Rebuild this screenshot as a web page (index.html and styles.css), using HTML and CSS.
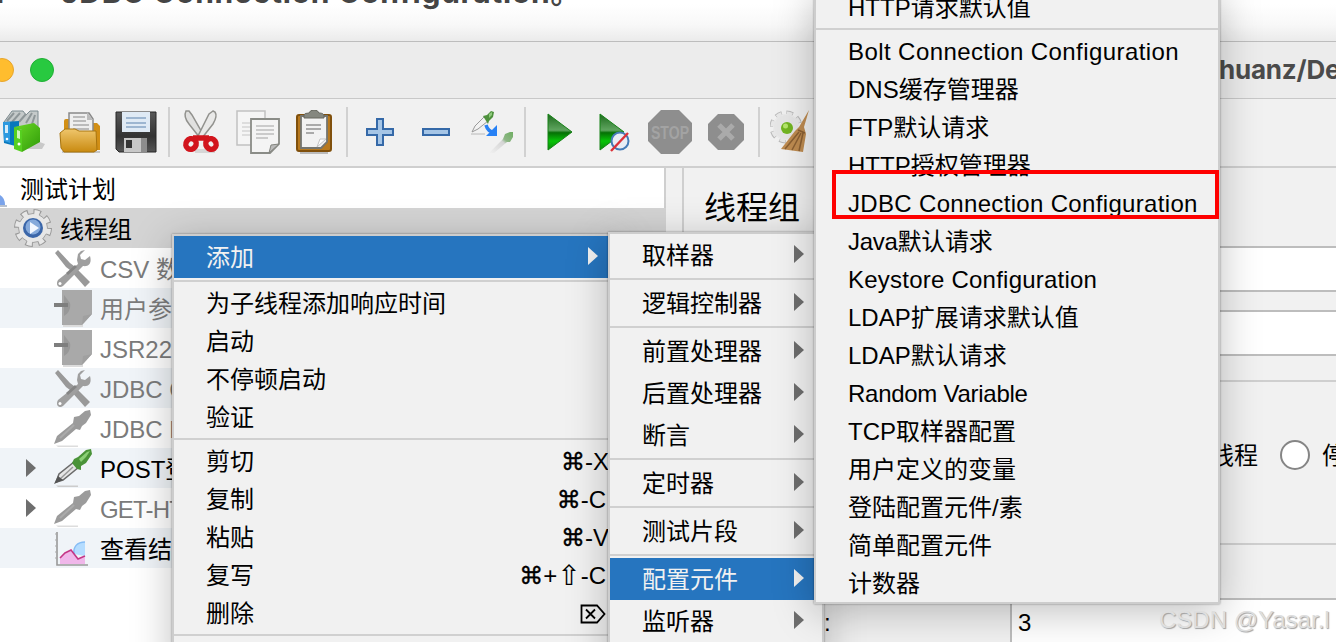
FILE: index.html
```html
<!DOCTYPE html>
<html lang="zh-CN">
<head>
<meta charset="utf-8">
<title>JMeter</title>
<link rel="stylesheet" href="styles.css">
</head>
<body>
<svg class="defs" width="0" height="0">
  <defs>
    <linearGradient id="gPlay" x1="0" y1="0" x2="0" y2="1"><stop offset="0" stop-color="#1d6a1d"/><stop offset=".45" stop-color="#5fa55f"/><stop offset=".52" stop-color="#067006"/><stop offset=".75" stop-color="#08c408"/><stop offset="1" stop-color="#0a8a0a"/></linearGradient>
    <linearGradient id="gFolder" x1="0" y1="0" x2="0" y2="1"><stop offset="0" stop-color="#efc66c"/><stop offset="1" stop-color="#c98a10"/></linearGradient>
    <linearGradient id="gGreen" x1="0" y1="0" x2="1" y2="1"><stop offset="0" stop-color="#6ddb28"/><stop offset="1" stop-color="#2f9a08"/></linearGradient>
    <linearGradient id="gDark" x1="0" y1="0" x2="0" y2="1"><stop offset="0" stop-color="#585858"/><stop offset=".6" stop-color="#333"/><stop offset="1" stop-color="#555"/></linearGradient>
    <linearGradient id="gFade" x1="1" y1="0" x2="0" y2="1"><stop offset="0" stop-color="#6fae62"/><stop offset=".35" stop-color="#8fb787"/><stop offset=".45" stop-color="#d5d5d5"/><stop offset="1" stop-color="#f1f1f1"/></linearGradient>
    <symbol id="tools" viewBox="0 0 40 40">
      <path d="M2 5 5 2l12 13 4 3 16 16-5 5-15-17-4-3z" fill="#999"/>
      <path d="M28 3l-3 3-1 6 1 4L5 32c-3 5 1 9 5 6l20-20c6 1 9-3 7-10l-5 4-4-1-1-4 5-5z" fill="#9f9f9f"/>
      <path d="M14 26l9-8" stroke="#858585" stroke-width="3"/><circle cx="7" cy="35.500" r="1.500" fill="#fff"/>
    </symbol>
    <symbol id="note" viewBox="0 0 40 40">
      <path d="M10 37h20v2H10z" fill="#dcdcdc"/>
      <path d="M9 2h30v24L29 37H9z" fill="#a9a9a9"/><path d="M29 37l1-9 9-2z" fill="#a0a0a0"/>
      <path d="M11 7l6 8c1 5-1 10-6 13" fill="#989898"/><path d="M1 15h14v4H1z" fill="#7e7e7e"/>
    </symbol>
    <symbol id="dropgray" viewBox="0 0 40 40">
      <path d="M3 37.500h22v1.500H5z" fill="#ddd"/>
      <path d="M1 36l3-8L20 15l1-6 5-1 6-5 5-1 1 5-5 8-4 3-2 4-4-1L9 33z" fill="#9b9b9b"/>
      <path d="M7 30l14-13" stroke="#ababab" stroke-width="2"/>
    </symbol>
    <symbol id="dropper" viewBox="0 0 40 40">
      <path d="M3 37.500h22v1.500H5z" fill="#ccc"/>
      <path d="M3 34l3-8L21 14l5 5L10 32z" fill="#e6e6e6" stroke="#6a6a6a" stroke-width="1.500"/>
      <path d="M7 31L20 19" stroke="#999" stroke-width="1.500"/><path d="M1 36l4-8 5 4z" fill="#555"/>
      <path d="M21 11l4-2 8-7 5-1 1 5-6 9-5 3 0 4-4-1-5-6z" fill="#4a9338"/><path d="M26 11l8-7 3-1-4 6-5 5z" fill="#8bcf76"/>
    </symbol>
  </defs>
</svg>

<div class="screen">
  <header class="article"><span class="article-mark">l</span><span class="article-title">JDBC Connection Configuration。</span></header>

  <div class="titlebar">
    <i class="light amber"></i><i class="light green"></i>
    <span class="path">huanz/De</span>
  </div>

  <div class="toolbar">
    <svg viewBox="0 0 44 44"><path d="M12 39h28l3-5-8-3z" fill="#c9c9c9"/><path d="M2 12L10 1h11l3 4 4-4h8v24L12 33z" fill="#c5caca" stroke="#7d8b90"/><path d="M5 11l7-8M10 12l8-9M17 12l7-8M24 13l6-10M30 14l3-9" stroke="#8e9698" stroke-width="2"/><path d="M1 12l16-1v26l-15-4z" fill="#0878bd"/><path d="M1 12h7v21l-6-2z" fill="#2d9ae0"/><path d="M3 15h3v8H3z" fill="#d6edfa"/><path d="M12 17l8 3v22l-8-3z" fill="#56cf20"/><path d="M12 17l20-4 6 5v14l-18 10V20z" fill="url(#gGreen)"/><path d="M15 20l3 1v8l-3-1z" fill="#cff5bc"/><circle cx="17" cy="34" r="1.500" fill="#fff"/><circle cx="5" cy="29" r="1.300" fill="#fff"/></svg>
    <svg viewBox="0 0 44 44"><path d="M4 41h38v2H4z" fill="#c5c5c5"/><path d="M6 11q0-2 2-2h5l2 4h24l3 3v24H6z" fill="#d28f15"/><path d="M11 24V3h20l4 6v18z" fill="#eee" stroke="#898989" stroke-width="1.500"/><path d="M15 7h12M15 11h13M15 15h16M15 19h16" stroke="#aaa" stroke-width="1.700"/><path d="M29 2l6 8h-6z" fill="#bbb"/><path d="M2 23l5-4h10l4 2h17l1 19-3 2H6l-3-4z" fill="url(#gFolder)" stroke="#a8740d"/></svg>
    <svg viewBox="0 0 44 44"><path d="M2 2h40v40H5l-3-3z" fill="url(#gDark)" stroke="#272727"/><path d="M8 2h28v20H8z" fill="#dfeaf5"/><path d="M12 8h20M12 13h20M12 17h20" stroke="#9db6d1" stroke-width="2"/><path d="M10 28h22v14H10z" fill="#c8c8c8"/><path d="M12 30h6v8h-6z" fill="#343434"/><path d="M27 28h6v14h-6z" fill="#8d8d8d"/></svg>
    <i class="sep"></i>
    <svg viewBox="0 0 44 44"><path d="M15 39h20v4H15z" fill="#d6d6d6"/><path d="M6 1c-2 4-1 8 3 13l11 14 4-2L12 5 9 1z" fill="#e0e0df" stroke="#92928e" stroke-width="1.500"/><path d="M33 1l-4 3-11 22 4 2 11-14c3-5 4-9 2-12z" fill="#e9e9e8" stroke="#92928e" stroke-width="1.500"/><g fill="none" stroke="#d2151d" stroke-width="5.500"><ellipse cx="11" cy="34" rx="5" ry="5.500" transform="rotate(35 11 34)"/><ellipse cx="31" cy="34" rx="5" ry="5.500" transform="rotate(-35 31 34)"/><path d="M13 28l8 0 8 0"/></g></svg>
    <svg viewBox="0 0 44 44"><path d="M1 1h28v34H1z" fill="#f5f5f5" stroke="#c1c1c1" stroke-width="1.500"/><path d="M6 13h10M6 17h10M6 21h10M6 25h10" stroke="#d5d5d5" stroke-width="1.500"/><path d="M15 9h28v25l-9 9H15z" fill="#f4f4f4" stroke="#8a8c87" stroke-width="1.800"/><path d="M20 16h18M20 20h18M20 24h18M20 28h12" stroke="#bdbdbd" stroke-width="1.600"/><path d="M33 43l2-8 8-1z" fill="#bbb" stroke="#83857f"/></svg>
    <svg viewBox="0 0 44 44"><path d="M8 42h28v2H8z" fill="#bbb"/><rect x="5" y="5" width="34" height="36" rx="2" fill="#b8791e" stroke="#80500c" stroke-width="2"/><path d="M9 6h26v26l-6 6H9z" fill="#f2f2f2" stroke="#747570" stroke-width="1.800"/><path d="M12 8v-3q0-2 5-2 1-3 5-3t5 3q5 0 5 3v2z" fill="#85877f" stroke="#66675f"/><path d="M14 15h15M14 19h15M14 23h8" stroke="#aaa" stroke-width="1.800"/><path d="M25 37l3-8 6 0z" fill="#fff" stroke="#c2c2c2"/></svg>
    <i class="sep"></i>
    <svg viewBox="0 0 44 44"><path d="M19 9h6v10h10v6H25v10h-6V25H9v-6h10z" fill="#a5c5e6" stroke="#3569a8" stroke-width="2"/></svg>
    <svg viewBox="0 0 44 44"><path d="M9 19h26v6H9z" fill="#a5c5e6" stroke="#3569a8" stroke-width="2"/></svg>
    <svg viewBox="0 0 44 44"><path d="M1 24h14" stroke="#b8b8b8"/><path d="M2 22l3-6L14 7l4 4L8 19z" fill="#f2f2f2" stroke="#999"/><path d="M13 6l4-1 4-4 3 1-1 5-4 4-1 3z" fill="#4e913d"/><path d="M19 4l3-2v3l-3 3z" fill="#8fcb7e"/><path d="M16 15q2 7 8 7" fill="none" stroke="#2781f5" stroke-width="3.500"/><path d="M27 15v11H16z" fill="#2781f5"/><path d="M19 43L33 29l2-5 5-2h3v5l-3 5-3 0L24 43z" fill="url(#gFade)"/></svg>
    <i class="sep"></i>
    <svg viewBox="0 0 44 44"><path d="M12 4l24 18-24 18z" fill="url(#gPlay)" stroke="#168216"/></svg>
    <svg viewBox="0 0 44 44"><path d="M8 4l24 18L8 40z" fill="url(#gPlay)" stroke="#168216"/><circle cx="28" cy="31" r="8.500" fill="#e8edf5" stroke="#457bb7" stroke-width="2"/><path d="M19 41l17-18" stroke="#dc3239" stroke-width="2.400"/></svg>
    <svg viewBox="0 0 44 44"><path d="M13 0h18l13 13v18L31 44H13L0 31V13z" fill="#8e8e8e"/><text x="3" y="29" class="stop" textLength="38" lengthAdjust="spacingAndGlyphs">STOP</text></svg>
    <svg viewBox="0 0 44 44"><path d="M14 4h16l10 10v16L30 40H14L4 30V14z" fill="#8e8e8e"/><path d="M15 15l14 14M29 15L15 29" stroke="#aaa" stroke-width="5"/></svg>
    <i class="sep"></i>
    <svg viewBox="0 0 44 44"><circle cx="16" cy="17" r="13" fill="#e1e1e1" stroke="#b9b9b9" stroke-width="7" stroke-dasharray="6 4.210"/><circle cx="16" cy="17" r="13" fill="#ececec" stroke="#e8e8e8" stroke-width="5" stroke-dasharray="5 5.210" stroke-dashoffset="-.5"/><circle cx="16" cy="17" r="12" fill="#e6e6e6"/><circle cx="17" cy="18" r="6" fill="#72b521"/><circle cx="15.500" cy="16" r="2.500" fill="#b5e66c"/><path d="M39 0l-5 17 2 7-3 18-22-3 14-18 4-4z" fill="#bf8c51"/><path d="M29 22L15 39M31 23L22 40M33 23l-4 18M28 20l7 3" stroke="#8b6033" stroke-width="1.500"/></svg>
  </div>

  <main class="main">
    <div class="tree">
      <div class="row root"><svg class="flask" viewBox="0 0 8 14"><path d="M0 2q5 3 5 10H0z" fill="#7aa3ea"/><path d="M0 12h7v2H0z" fill="#b9c2cf"/></svg><span>测试计划</span></div>
      <div class="row group"><svg class="ico" viewBox="0 0 40 40"><circle cx="20" cy="20" r="15.500" fill="none" stroke="#999" stroke-width="7" stroke-dasharray="7 5.170"/><circle cx="20" cy="20" r="14.500" fill="#e7e7e7" stroke="#a2a2a2"/><circle cx="20" cy="20" r="15.500" fill="none" stroke="#e7e7e7" stroke-width="5" stroke-dasharray="5 7.170" stroke-dashoffset="-1"/><circle cx="20" cy="20" r="10" fill="#3b66a9"/><circle cx="20" cy="19" r="7.500" fill="#86aadb"/><path d="M17 14l9 6-9 6z" fill="#f4f8ff"/></svg><span>线程组</span></div>
      <div class="row off"><i class="tri"></i><svg class="ico"><use href="#tools"/></svg><span>CSV 数据</span></div>
      <div class="row off"><i class="tri"></i><svg class="ico"><use href="#note"/></svg><span>用户参数</span></div>
      <div class="row off"><i class="tri"></i><svg class="ico"><use href="#note"/></svg><span>JSR223</span></div>
      <div class="row off"><i class="tri"></i><svg class="ico"><use href="#tools"/></svg><span>JDBC C</span></div>
      <div class="row off"><i class="tri"></i><svg class="ico"><use href="#dropgray"/></svg><span>JDBC R</span></div>
      <div class="row"><i class="tri on"></i><svg class="ico"><use href="#dropper"/></svg><span>POST登</span></div>
      <div class="row off"><i class="tri on"></i><svg class="ico"><use href="#dropgray"/></svg><span class="get">GET-HT</span></div>
      <div class="row"><i class="tri"></i><svg class="ico" viewBox="0 0 40 40"><path d="M4 4v33h31" fill="none" stroke="#999" stroke-width="1.600"/><path d="M2 6h3M2 12h3M2 18h3M2 24h3M2 30h3" stroke="#aaa"/><path d="M21 26c-1-7 3-12 11-12v14z" fill="#b4dcff"/><path d="M21 26c-1-7 3-12 11-12" fill="none" stroke="#86bdf5" stroke-width="1.500"/><path d="M7 36v-6l10-8 8 9 7-2v7z" fill="#f0b7ea"/><path d="M7 30l5-5 6-3 7 9 7-3" fill="none" stroke="#c53586" stroke-width="1.600"/></svg><span>查看结果</span></div>
    </div>
    <section class="panel">
      <h1>线程组</h1>
      <div class="field"></div>
      <div class="field second"></div>
      <div class="choices"><span>线程</span><i class="radio"></i><span>停止</span></div>
      <div class="count"><span class="colon">:</span><div class="number">3</div></div>
    </section>
  </main>

  <div class="menu first">
    <div class="item tall hot"><span>添加</span><i class="arrow"></i></div>
    <hr>
    <div class="item">为子线程添加响应时间</div>
    <div class="item">启动</div>
    <div class="item">不停顿启动</div>
    <div class="item">验证</div>
    <hr>
    <div class="item"><span>剪切</span><span class="keys"><b>⌘</b>-X</span></div>
    <div class="item"><span>复制</span><span class="keys letter-c"><b>⌘</b>-C</span></div>
    <div class="item"><span>粘贴</span><span class="keys"><b>⌘</b>-V</span></div>
    <div class="item"><span>复写</span><span class="keys letter-c"><b>⌘</b>+<b class="shift">⇧</b>-C</span></div>
    <div class="item"><span>删除</span><svg class="del" viewBox="0 0 26 20"><path d="M1.500 1.500h15.500l7.500 8.500-7.500 8.500H1.500zM6 5.500l9 9M15 5.500l-9 9" fill="none" stroke="#000" stroke-width="1.800"/></svg></div>
    <hr>
  </div>

  <div class="menu second-menu">
    <div class="item tall"><span>取样器</span><i class="arrow"></i></div>
    <hr>
    <div class="item tall"><span>逻辑控制器</span><i class="arrow"></i></div>
    <hr>
    <div class="item tall"><span>前置处理器</span><i class="arrow"></i></div>
    <div class="item tall"><span>后置处理器</span><i class="arrow"></i></div>
    <div class="item tall"><span>断言</span><i class="arrow"></i></div>
    <hr>
    <div class="item tall"><span>定时器</span><i class="arrow"></i></div>
    <hr>
    <div class="item tall"><span>测试片段</span><i class="arrow"></i></div>
    <hr>
    <div class="item tall hot"><span>配置元件</span><i class="arrow"></i></div>
    <div class="item tall"><span>监听器</span><i class="arrow"></i></div>
  </div>

  <div class="menu third">
    <div class="item">HTTP请求默认值</div>
    <hr>
    <div class="item wide">Bolt Connection Configuration</div>
    <div class="item">DNS缓存管理器</div>
    <div class="item">FTP默认请求</div>
    <div class="item">HTTP授权管理器</div>
    <div class="item wide-jdbc">JDBC Connection Configuration</div>
    <div class="item narrow">Java默认请求</div>
    <div class="item wide-key">Keystore Configuration</div>
    <div class="item">LDAP扩展请求默认值</div>
    <div class="item">LDAP默认请求</div>
    <div class="item narrow">Random Variable</div>
    <div class="item">TCP取样器配置</div>
    <div class="item">用户定义的变量</div>
    <div class="item">登陆配置元件/素</div>
    <div class="item">简单配置元件</div>
    <div class="item">计数器</div>
  </div>
  <div class="marker"></div>
  <div class="watermark">CSDN @Yasar.l</div>
</div>
</body>
</html>
```
FILE: styles.css
```css
* { box-sizing: border-box; }
body { margin: 0; font-family: "Liberation Sans", "Noto Sans CJK SC", sans-serif; font-size: 24px; color: #000; }
.defs { position: absolute; }
.screen { position: relative; display: flex; flex-direction: column; width: 1336px; height: 642px; overflow: hidden; background: #f1f1f1; white-space: nowrap; }

.article { display: flex; flex: none; height: 42px; overflow: hidden; border-bottom: 1px solid #bdbdbd; background: linear-gradient(#fff 10%, #f8f8f8 60%, #ebebeb); font: 700 30px/34px Inter, "Noto Sans CJK SC", sans-serif; letter-spacing: .75px; color: #454545; }
.article span { margin-top: -25px; }
.article-mark { width: 61px; text-indent: -4px; }

.titlebar { display: flex; flex: none; align-items: center; height: 57px; border-bottom: 1px solid #c8c8c8; background: #ececec; }
.light { flex: none; width: 24px; height: 24px; border-radius: 50%; }
.amber { margin-left: -10px; background: #ffbd2e; border: 1px solid #e7a52c; }
.green { margin-left: 16px; background: #28c940; border: 1px solid #20af35; }
.path { flex: none; margin-left: 1165px; font: 700 26px/40px Inter, sans-serif; letter-spacing: -.2px; color: #4b4b4b; }

.toolbar { display: flex; flex: none; align-items: center; height: 69px; padding-bottom: 1px; border-bottom: 2px solid #cfcfcf; background: #f1f1f1; }
.toolbar svg { flex: none; width: 44px; height: 44px; margin: 0 6px; }
.toolbar svg:first-child { margin-left: 2px; }
.sep { flex: none; width: 2px; height: 50px; margin: 0 4px; background: #d1d1d1; }
.stop { font: 700 18px "Liberation Sans", sans-serif; fill: #a3a3a3; }

.main { display: flex; flex: 1; }
.tree { flex: none; width: 666px; border-right: 2px solid #cfcfcf; background: #fff; }
.row { display: flex; align-items: center; height: 40px; line-height: 40px; }
.row:nth-child(even) { background: #f0f4f8; }
.row.group { width: 666px; padding-left: 13px; background: #d4d4d4; }
.row.off { color: #7b7b7b; }
.row span { margin-left: 7px; padding-top: 3px; }
.row .get { letter-spacing: -.8px; }
.flask { width: 8px; height: 14px; margin-top: 24px; }
.root span { margin-left: 12px; }
.ico { flex: none; width: 40px; height: 40px; }
.tri { flex: none; width: 27px; height: 18px; margin-left: 26px; }
.tri.on { width: 10px; margin-right: 17px; background: #6e6e6e; clip-path: polygon(0 0, 100% 50%, 0 100%); }

.panel { flex: 1; margin-left: 16px; border-left: 2px solid #cfcfcf; }
h1 { height: 78px; margin: 0; padding-left: 20px; font-size: 32px; font-weight: 400; line-height: 80px; }
.field { height: 46px; border: solid #bdbdbd; border-width: 2px 0; background: #fff; }
.second { margin-top: 18px; }
.choices { display: flex; align-items: center; height: 165px; margin-top: 24px; padding: 0 0 16px 526px; border: solid #cfcfcf; border-width: 2px 0; }
.choices span { flex: none; margin-top: -2px; }
.radio { flex: none; width: 30px; height: 30px; margin: 0 12px 0 22px; border: 2px solid #858585; border-radius: 50%; background: #fff; }
.count { display: flex; height: 60px; margin-top: 53px; }
.colon { width: 326px; padding-left: 140px; line-height: 50px; }
.number { flex: 1; padding-left: 6px; border: 2px solid #bdbdbd; border-right: 0; background: #fff; line-height: 45px; }

.menu { position: absolute; border: 2px solid #cdcdcd; background: #f1f1f1; box-shadow: 0 8px 38px rgba(0,0,0,.25), 0 0 2px rgba(0,0,0,.4); }
.menu hr { height: 2px; margin: 2px 0; border: 0; background: #d0d0d0; }
.item { display: flex; align-items: center; justify-content: space-between; height: 38px; padding: 1px 0 0 32px; line-height: 36px; }
.tall { height: 42px; }
.hot { background: #2675bf; color: #f1f1f1; }
.arrow { width: 10px; height: 18px; margin: -3px 18px 0 0; background: #6e6e6e; clip-path: polygon(0 0, 100% 50%, 0 100%); }
.hot .arrow { background: #f1f1f1; }
.first { left: 172px; top: 234px; width: 446px; height: 440px; }
.keys { display: flex; align-items: center; margin-right: 7px; }
.keys.letter-c { margin-right: 10px; }
.keys b { font: 400 24px/36px "DejaVu Sans", sans-serif; -webkit-text-stroke: .4px #000; }
.keys .shift { font-size: 28px; -webkit-text-stroke: 0; }
.del { width: 26px; height: 20px; margin-right: 10px; }
.second-menu { left: 608px; top: 232px; width: 216px; height: 440px; }
.third { left: 814px; top: -14px; width: 406px; height: 618px; }
.wide { letter-spacing: .42px; }
.wide-jdbc { letter-spacing: .33px; }
.wide-key { letter-spacing: .23px; }
.narrow { letter-spacing: -.27px; }

.marker { position: absolute; left: 832px; top: 170px; width: 387px; height: 49px; border: 4px solid #fe0000; }
.watermark { position: absolute; left: 1159px; top: 604px; line-height: 32px; color: #dedede; text-shadow: 1px 1px 1px #a0a0a0; }
```
